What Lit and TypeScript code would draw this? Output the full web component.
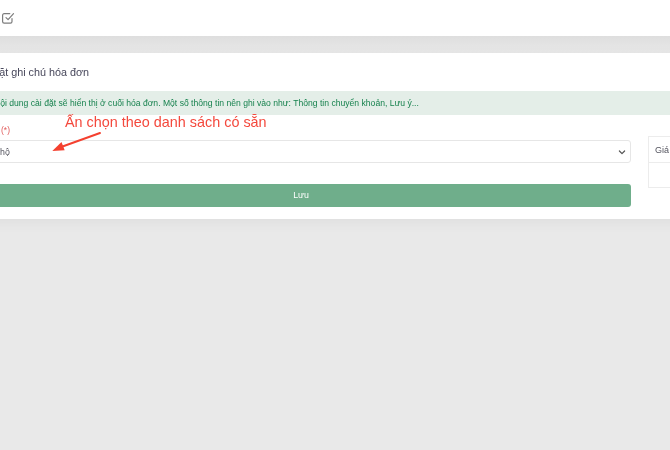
import { LitElement, html, css } from "lit";
import { customElement } from "lit/decorators.js";

@customElement("app-root")
export class AppRoot extends LitElement {
  static styles = css`
    :host {
      display: block;
      width: 670px;
      height: 450px;
      overflow: hidden;
      position: relative;
      background: #e9e9e9;
      font-family: "Liberation Sans", Arial, sans-serif;
      color: #4b4b5a;
    }
    .page { filter: blur(0.35px); height: 450px; position: relative; overflow: hidden; }
    .topbar {
      height: 36px;
      background: #fff;
      display: flex;
      align-items: center;
      padding-left: 1px;
      box-sizing: border-box;
    }
    .topbar svg { display: block; margin-top: -1px; }
    .shade {
      height: 17px;
      background: linear-gradient(#dedede, #e9e9e9);
    }
    .card {
      width: 735px;
      margin-left: -40px;
      height: 166px;
      background: #fff;
      box-shadow: 0 3px 14px rgba(0, 0, 0, 0.05);
      display: flex;
      flex-direction: column;
    }
    .title {
      height: 38px;
      padding-left: 14px;
      display: flex;
      align-items: center;
      font-size: 10.8px;
      color: #46465a;
      box-sizing: border-box;
    }
    .alert {
      height: 24px;
      background: #e4eee8;
      color: #17824e;
      font-size: 8.6px;
      display: flex;
      align-items: center;
      padding-left: 34px;
      white-space: nowrap;
    }
    .body {
      display: flex;
      gap: 17px;
      align-items: flex-start;
      padding-top: 9px;
    }
    .col { width: 671px; flex: none; }
    .label { height: 16px; font-size: 8.5px; color: #e05a5a; padding-left: 41px; line-height: 12px; }
    .select {
      height: 23px;
      box-sizing: border-box;
      border: 1px solid #e6e6e6;
      border-radius: 3px;
      display: flex;
      align-items: center;
      justify-content: space-between;
      padding: 0 3px 0 39px;
      font-size: 8.8px;
      color: #55555f;
    }
    .btn {
      margin-top: 21px;
      height: 23px;
      box-sizing: border-box;
      padding: 0 0 2px 11px;
      background: #6fae8b;
      border-radius: 3px;
      color: #fff;
      font-size: 8.8px;
      display: flex;
      align-items: center;
      justify-content: center;
    }
    .side {
      margin-top: 12px;
      width: 60px;
      flex: none;
      height: 52px;
      box-sizing: border-box;
      border: 1px solid #ececec;
      border-right: none;
      font-size: 9px;
      color: #55555f;
    }
    .side div {
      height: 26px;
      box-sizing: border-box;
      padding-left: 6px;
      display: flex;
      align-items: center;
      border-bottom: 1px solid #ececec;
    }
    .note {
      position: absolute;
      left: 65px;
      top: 114px;
      font-size: 14.4px;
      color: #f4483c;
      white-space: nowrap;
    }
    .arrow { position: absolute; left: 50px; top: 130px; }
  `;

  render() {
    return html`
      <div class="page">
        <div class="topbar">
          <svg width="14" height="14" viewBox="0 0 14 14" fill="none" stroke="#7d7d7d" stroke-width="1.2" stroke-linecap="round" stroke-linejoin="round">
            <path d="M11 7.5v3a1.6 1.6 0 0 1-1.6 1.6H3.2a1.6 1.6 0 0 1-1.6-1.6V4.2a1.6 1.6 0 0 1 1.6-1.6h5.6"/>
            <path d="M5 6.6l2.1 2.1 5.4-6"/>
          </svg>
        </div>
        <div class="shade"></div>
        <div class="card">
          <div class="title">Cài đặt ghi chú hóa đơn</div>
          <div class="alert">Nội dung cài đặt sẽ hiển thị ở cuối hóa đơn. Một số thông tin nên ghi vào như: Thông tin chuyển khoản, Lưu ý...</div>
          <div class="body">
            <div class="col">
              <div class="label">(*)</div>
              <div class="select">
                <span>hộ</span>
                <svg width="10" height="10" viewBox="0 0 10 10" fill="none" stroke="#555" stroke-width="1.2" stroke-linecap="round" stroke-linejoin="round"><path d="M2.4 4l2.6 2.6L7.6 4"/></svg>
              </div>
              <div class="btn">Lưu</div>
            </div>
            <div class="side"><div>Giá</div></div>
          </div>
        </div>
        <div class="note">Ấn chọn theo danh sách có sẵn</div>
        <svg class="arrow" width="55" height="25" viewBox="0 0 55 25">
          <path d="M50 3L12.5 16.5" stroke="#f4402f" stroke-width="1.9" fill="none" stroke-linecap="round"/>
          <path d="M2.3 21L11.5 12l3.2 8.3z" fill="#f4402f"/>
        </svg>
      </div>
    `;
  }
}
